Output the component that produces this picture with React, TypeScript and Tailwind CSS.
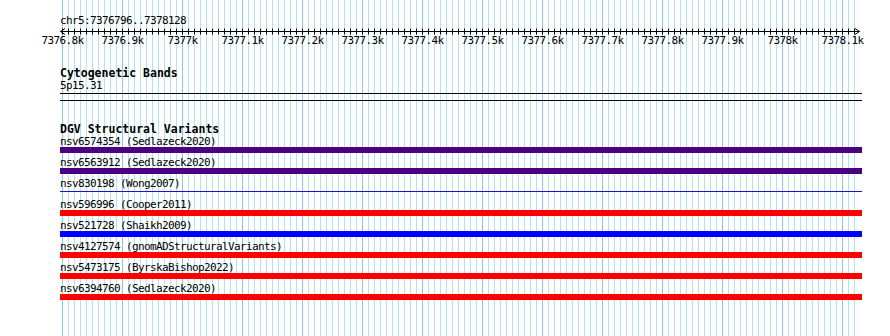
const START = 7376796;
const END = 7378128;
const X0 = 60;
const PX = 0.6;

const xOf = (bp: number) => X0 + (bp - START) * PX;
const crisp = (x: number) => Math.floor(x) + 0.5;

const ticks: number[] = [];
for (let bp = 7376800; bp <= END; bp += 10) ticks.push(bp);

const label = (bp: number) => {
    const k = (bp / 1000).toFixed(1);
    return (k.endsWith('.0') ? k.slice(0, -2) : k) + 'k';
};

type Variant = { id: string; study: string; kind: 'bar' | 'line'; color: string };

const variants: Variant[] = [
    { id: 'nsv6574354', study: 'Sedlazeck2020', kind: 'bar', color: 'bg-[#4b0082]' },
    { id: 'nsv6563912', study: 'Sedlazeck2020', kind: 'bar', color: 'bg-[#4b0082]' },
    { id: 'nsv830198', study: 'Wong2007', kind: 'line', color: 'bg-[#1414c8]' },
    { id: 'nsv596996', study: 'Cooper2011', kind: 'bar', color: 'bg-[#ff0000]' },
    { id: 'nsv521728', study: 'Shaikh2009', kind: 'bar', color: 'bg-[#0000ff]' },
    { id: 'nsv4127574', study: 'gnomADStructuralVariants', kind: 'bar', color: 'bg-[#ff0000]' },
    { id: 'nsv5473175', study: 'ByrskaBishop2022', kind: 'bar', color: 'bg-[#ff0000]' },
    { id: 'nsv6394760', study: 'Sedlazeck2020', kind: 'bar', color: 'bg-[#ff0000]' },
];

function Grid() {
    return (
        <svg className="absolute inset-0" width={890} height={336}>
            {ticks.map((bp) => (
                <line
                    key={bp}
                    x1={crisp(xOf(bp))}
                    x2={crisp(xOf(bp))}
                    y1={0}
                    y2={336}
                    stroke={bp % 100 === 0 ? '#8cc4ea' : '#b4e4ea'}
                    strokeWidth={1}
                />
            ))}
        </svg>
    );
}

function Ruler() {
    return (
        <svg className="block overflow-visible" width={802} height={22}>
            <line x1={0} x2={800} y1={5.5} y2={5.5} stroke="#000" strokeWidth={1} />
            <polyline points="5,2.5 0.5,5.5 5,8.5" fill="none" stroke="#000" strokeWidth={1} />
            <polyline points="795,2.5 799.5,5.5 795,8.5" fill="none" stroke="#000" strokeWidth={1} />
            {ticks.map((bp) => (
                <line
                    key={bp}
                    x1={crisp(xOf(bp)) - X0}
                    x2={crisp(xOf(bp)) - X0}
                    y1={2.5}
                    y2={8.5}
                    stroke="#000"
                    strokeWidth={1}
                />
            ))}
            {ticks
                .filter((bp) => bp % 100 === 0)
                .map((bp) => (
                    <text
                        key={bp}
                        x={xOf(bp) - X0}
                        y={18}
                        textAnchor="middle"
                        fontSize={11}
                        letterSpacing={-0.62}
                        fill="#000"
                    >
                        {label(bp)}
                    </text>
                ))}
        </svg>
    );
}

export default function App() {
    return (
        <div className="relative w-[890px] h-[336px] overflow-hidden bg-white text-black font-['DejaVu_Sans_Mono',monospace]">
            <Grid />
            <div className="relative w-[862px] pl-[60px] pt-[16px]">
                <div className="text-[11px] leading-[10px] tracking-[-0.62px]">chr5:7376796..7378128</div>
                <Ruler />

                <div className="mt-[19px] text-[11.5px] leading-[12px] font-bold">Cytogenetic Bands</div>
                <div className="mt-[2px] text-[11px] leading-[10px] tracking-[-0.62px]">5p15.31</div>
                <div className="mt-[2px] h-px bg-black" />
                <div className="mt-[6px] h-px bg-black" />

                <div className="mt-[22px] text-[11.5px] leading-[12px] font-bold">DGV Structural Variants</div>
                <div className="mt-[2px] flex flex-col gap-[5px]">
                    {variants.map((v) => (
                        <div key={v.id}>
                            <div className="text-[11px] leading-[10px] tracking-[-0.62px] whitespace-pre">
                                {v.id} ({v.study})
                            </div>
                            {v.kind === 'bar' ? (
                                <div className={`h-[6px] ${v.color}`} />
                            ) : (
                                <div className="h-[6px] pt-[2px]">
                                    <div className={`h-px ${v.color}`} />
                                </div>
                            )}
                        </div>
                    ))}
                </div>
            </div>
        </div>
    );
}
